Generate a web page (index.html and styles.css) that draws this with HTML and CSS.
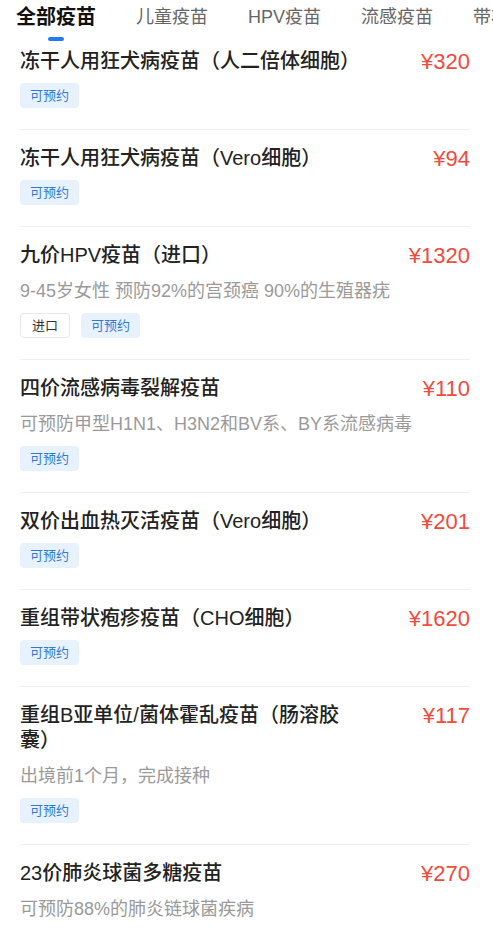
FILE: index.html
```html
<!DOCTYPE html>
<html lang="zh-CN">
<head>
<meta charset="utf-8">
<title>疫苗列表</title>
<link rel="stylesheet" href="styles.css">
</head>
<body>
<nav class="tabs">
  <span class="tab active">全部疫苗</span>
  <span class="tab">儿童疫苗</span>
  <span class="tab">HPV疫苗</span>
  <span class="tab">流感疫苗</span>
  <span class="tab">带状疱疹疫苗</span>
</nav>
<ul class="list">
  <li class="item">
    <div class="head"><h3 class="title">冻干人用狂犬病疫苗（人二倍体细胞）</h3><span class="price">¥320</span></div>
    <div class="tags"><span class="tag ok">可预约</span></div>
  </li>
  <li class="item">
    <div class="head"><h3 class="title">冻干人用狂犬病疫苗（Vero细胞）</h3><span class="price">¥94</span></div>
    <div class="tags"><span class="tag ok">可预约</span></div>
  </li>
  <li class="item">
    <div class="head"><h3 class="title">九价HPV疫苗（进口）</h3><span class="price">¥1320</span></div>
    <p class="desc">9-45岁女性 预防92%的宫颈癌 90%的生殖器疣</p>
    <div class="tags"><span class="tag plain">进口</span><span class="tag ok">可预约</span></div>
  </li>
  <li class="item">
    <div class="head"><h3 class="title">四价流感病毒裂解疫苗</h3><span class="price">¥110</span></div>
    <p class="desc">可预防甲型H1N1、H3N2和BV系、BY系流感病毒</p>
    <div class="tags"><span class="tag ok">可预约</span></div>
  </li>
  <li class="item">
    <div class="head"><h3 class="title">双价出血热灭活疫苗（Vero细胞）</h3><span class="price">¥201</span></div>
    <div class="tags"><span class="tag ok">可预约</span></div>
  </li>
  <li class="item">
    <div class="head"><h3 class="title">重组带状疱疹疫苗（CHO细胞）</h3><span class="price">¥1620</span></div>
    <div class="tags"><span class="tag ok">可预约</span></div>
  </li>
  <li class="item">
    <div class="head"><h3 class="title">重组B亚单位/菌体霍乱疫苗（肠溶胶<br>囊）</h3><span class="price">¥117</span></div>
    <p class="desc">出境前1个月，完成接种</p>
    <div class="tags"><span class="tag ok">可预约</span></div>
  </li>
  <li class="item">
    <div class="head"><h3 class="title">23价肺炎球菌多糖疫苗</h3><span class="price">¥270</span></div>
    <p class="desc">可预防88%的肺炎链球菌疾病</p>
    <div class="tags"><span class="tag ok">可预约</span></div>
  </li>
</ul>
</body>
</html>
```
FILE: styles.css
```css
* { box-sizing: border-box; }
html, body {
  margin: 0;
  padding: 0;
  background: #fff;
  font-family: "Liberation Sans", "Noto Sans CJK SC", sans-serif;
  overflow: hidden;
}
.tabs {
  position: relative;
  z-index: 2;
  display: flex;
  align-items: flex-start;
  gap: 40px;
  height: 46px;
  padding-left: 16px;
  background: #fff;
  white-space: nowrap;
  overflow: hidden;
}
.tab {
  position: relative;
  flex-shrink: 0;
  font-size: 18px;
  line-height: 34px;
  color: #666;
}
.tab.active {
  font-size: 20px;
  font-weight: 700;
  color: #111;
}
.tab.active::after {
  content: "";
  position: absolute;
  left: 50%;
  top: 37px;
  width: 16px;
  height: 4px;
  margin-left: -8px;
  border-radius: 2px;
  background: #1f7bf0;
}
.list {
  list-style: none;
  margin: -13px 0 0;
  padding: 0;
}
.item {
  margin: 0 23px 0 20px;
  padding: 16px 0 21px;
  border-bottom: 1px solid #f0f0f0;
}
.head {
  display: flex;
  align-items: flex-start;
  gap: 20px;
}
.title {
  flex: 1;
  margin: 0;
  font-size: 20px;
  font-weight: 500;
  line-height: 25px;
  color: #222;
}
.price {
  flex-shrink: 0;
  font-size: 22px;
  line-height: 25px;
  color: #f24a3d;
}
.desc {
  margin: 10px 0 0;
  font-size: 18px;
  line-height: 26px;
  color: #9a9a9a;
  white-space: nowrap;
}
.tags {
  display: flex;
  gap: 11px;
  margin-top: 9px;
}
.tag {
  height: 25px;
  padding: 0 10px;
  border-radius: 4px;
  font-size: 13px;
  line-height: 25px;
}
.tag.ok {
  background: #e8f2fe;
  color: #2f7ad9;
}
.tag.plain {
  border: 1px solid #e8e8e8;
  color: #333;
  line-height: 23px;
  padding: 0 11px;
}
```
